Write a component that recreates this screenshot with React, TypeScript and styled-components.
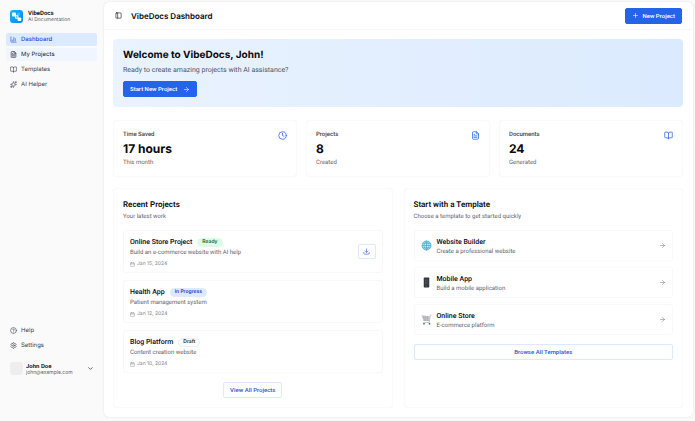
import React from "react";
import styled, { createGlobalStyle, css } from "styled-components";
import {
  ArrowRight,
  BookOpen,
  Calendar,
  ChartColumn,
  ChevronDown,
  CircleHelp,
  Clock,
  Download,
  FileText,
  PanelLeft,
  Plus,
  Settings,
  Sparkles,
} from "lucide-react";

const GlobalStyle = createGlobalStyle`
  *, *::before, *::after { box-sizing: border-box; }
  body {
    margin: 0;
    background: #fafafa;
    color: #09090f;
    font-family: Roboto, "Liberation Sans", sans-serif;
    font-size: 6px;
    line-height: 8px;
    text-rendering: geometricPrecision;
  }
  h1, h2, h3, p { margin: 0; }
  button { font: inherit; color: inherit; cursor: pointer; }
  a { color: inherit; text-decoration: none; }
  ul { list-style: none; margin: 0; padding: 0; }
  svg { flex: none; display: block; }
`;

const displayFont = `Inter, "Liberation Sans", sans-serif`;

const Shell = styled.div`
  display: flex;
  min-height: 100vh;
`;

const Sidebar = styled.aside`
  flex: none;
  width: 104px;
  display: flex;
  flex-direction: column;
  padding: 10px 6px 46px;
`;

const Brand = styled.a`
  display: flex;
  align-items: center;
  gap: 5px;
  padding-left: 4px;
`;

const BrandName = styled.span`
  display: block;
  font-weight: 600;
  line-height: 7px;
`;

const SmallText = styled.span`
  display: block;
  font-family: ${displayFont};
  font-size: 5px;
  line-height: 6px;
  color: #62626b;
`;

const NavList = styled.ul`
  display: flex;
  flex-direction: column;
  gap: 2px;
`;

const MainNav = styled.nav`
  margin-top: 10px;
`;

const FooterNav = styled.nav`
  margin-top: auto;
`;

const NavLink = styled.a<{ $state?: "active" | "hover" }>`
  display: flex;
  align-items: center;
  gap: 4px;
  height: 13px;
  padding: 0 4px;
  margin-right: 1px;
  border-radius: 2px;
  color: #3f3f46;
  font-family: ${displayFont};
  ${(p) =>
    p.$state === "active" &&
    css`
      background: #dbeafe;
      color: #1d4ed8;
      font-weight: 500;
    `}
  ${(p) =>
    p.$state === "hover" &&
    css`
      background: #eff6ff;
      color: #18181b;
    `}
`;

const UserButton = styled.button`
  display: flex;
  align-items: center;
  gap: 3px;
  margin-top: 10px;
  padding: 0 4px;
  border: 0;
  background: none;
  text-align: left;

  > svg { margin-left: auto; }
`;

const Avatar = styled.span`
  width: 13px;
  height: 13px;
  border-radius: 3px;
  background: #eeeeef;
`;

const Panel = styled.main`
  flex: 1;
  min-width: 0;
  margin: 2px 2px 4px 0;
  background: #fff;
  border-radius: 5px;
  box-shadow: 0 0 2px rgba(0, 0, 0, 0.13);
`;

const TopBar = styled.header`
  display: flex;
  align-items: center;
  height: 28px;
  padding: 0 11px 0 10px;
  border-bottom: 1px solid #f6f6f8;
`;

const IconButton = styled.button`
  display: grid;
  place-items: center;
  width: 8px;
  height: 8px;
  padding: 0;
  border: 0;
  background: none;
`;

const PageTitle = styled.h1`
  margin-left: 9px;
  font-family: ${displayFont};
  font-size: 8px;
  line-height: 12px;
  font-weight: 600;
`;

const Button = styled.button<{ $outline?: boolean; $wide?: boolean; $tight?: boolean }>`
  display: inline-flex;
  align-items: center;
  justify-content: center;
  gap: ${(p) => (p.$tight ? 3 : 6)}px;
  height: 16px;
  padding: 0 6px;
  width: ${(p) => (p.$wide ? "100%" : "auto")};
  border: 1px solid ${(p) => (p.$outline ? "#dbeafe" : "#2563eb")};
  border-radius: 2px;
  background: ${(p) => (p.$outline ? "#fff" : "#2563eb")};
  color: ${(p) => (p.$outline ? "#2458d6" : "#fff")};
  font-weight: 500;
  white-space: nowrap;
`;

const TopAction = styled.div`
  margin-left: auto;
`;

const Content = styled.div`
  padding: 9px 10px 9px 9px;
`;

const Hero = styled.section`
  padding: 10px;
  border-radius: 4px;
  background: linear-gradient(90deg, #eaf3ff, #dbeafe);
`;

const HeroTitle = styled.h2`
  font-family: ${displayFont};
  font-size: 10px;
  line-height: 13px;
  font-weight: 700;
`;

const HeroText = styled.p`
  margin: 3px 0 6px;
  font-size: 7px;
  line-height: 10px;
  color: #4b5563;
`;

const Card = styled.section`
  padding: 10px 9px 9px;
  border: 1px solid #fafafc;
  border-radius: 4px;
  background: #fff;
  box-shadow: 0 0 1px rgba(20, 30, 60, 0.05);
`;

const Stats = styled.div`
  display: grid;
  grid-template-columns: repeat(3, 1fr);
  gap: 9px;
  margin: 13px 0 11px;
`;

const StatHead = styled.div`
  display: flex;
  justify-content: space-between;
  align-items: center;
  height: 8px;
  color: #3f3f46;
  font-weight: 500;

  svg { color: #2563eb; }
`;

const StatValue = styled.p`
  margin: 3px 0;
  font-family: ${displayFont};
  font-size: 12px;
  line-height: 14px;
  font-weight: 700;
`;

const Muted = styled.p`
  color: #62626b;
`;

const Columns = styled.div`
  display: grid;
  grid-template-columns: repeat(2, 1fr);
  gap: 11px;
`;

const CardTitle = styled.h2`
  font-size: 8px;
  line-height: 12px;
  font-weight: 600;
`;

const CardHead = styled.header`
  display: flex;
  flex-direction: column;
  gap: 2px;
  margin-bottom: 9px;
`;

const Stack = styled.div<{ $gap: number }>`
  display: flex;
  flex-direction: column;
  gap: ${(p) => p.$gap}px;
`;

const tile = css`
  border: 1px solid #f8f8fa;
  border-radius: 3px;
  background: #fff;
`;

const Project = styled.article`
  ${tile}
  display: flex;
  align-items: center;
  justify-content: space-between;
  height: 43px;
  padding: 0 6px;
`;

const ProjectInfo = styled.div`
  padding-top: 2px;
`;

const ProjectHead = styled.div`
  display: flex;
  align-items: center;
  gap: 5px;
  margin-bottom: 2px;
`;

const ItemTitle = styled.h3`
  font-size: 7px;
  line-height: 9px;
  font-weight: 500;
`;

type Tone = "ready" | "progress" | "draft";
const tones: Record<Tone, [string, string, string]> = {
  ready: ["#dcfce7", "#166534", "#dcfce7"],
  progress: ["#dbeafe", "#1e40af", "#dbeafe"],
  draft: ["#fbfcfd", "#27272a", "#eceff3"],
};

const Badge = styled.span<{ $tone: Tone }>`
  height: 9px;
  padding: 0 4px;
  border: 1px solid ${(p) => tones[p.$tone][2]};
  border-radius: 5px;
  background: ${(p) => tones[p.$tone][0]};
  color: ${(p) => tones[p.$tone][1]};
  font-family: ${displayFont};
  font-size: 5px;
  line-height: 7px;
  font-weight: 600;
`;

const DateLine = styled.p`
  display: flex;
  align-items: center;
  gap: 2px;
  margin-top: 4px;
  font-family: ${displayFont};
  font-size: 5px;
  line-height: 6px;
  color: #85858f;
`;

const DownloadButton = styled(Button)`
  width: 18px;
  height: 15px;
  padding: 0;
`;

const Centered = styled.div`
  display: flex;
  justify-content: center;
  margin-top: 9px;
`;

const Template = styled.a`
  ${tile}
  display: flex;
  align-items: center;
  gap: 5px;
  height: 31px;
  padding: 0 6px;

  > svg:last-child { margin-left: auto; color: #85858f; }
`;

const TemplateInfo = styled.div`
  display: grid;
  gap: 1px;
  padding-top: 2px;
`;

const Logo = () => (
  <svg width="13" height="13" viewBox="0 0 26 26" aria-hidden="true">
    <defs>
      <linearGradient id="brand" x1="0" y1="0" x2="1" y2="1">
        <stop offset="0" stopColor="#18b5f8" />
        <stop offset="1" stopColor="#0788f2" />
      </linearGradient>
    </defs>
    <rect width="26" height="26" rx="6" fill="url(#brand)" />
    <rect x="4" y="5" width="8" height="8" rx="2" fill="#fff" />
    <rect x="10" y="10.500" width="7" height="7" rx="1.500" fill="#fff" />
    <rect x="15" y="15" width="7.500" height="7" rx="2" fill="#fff" />
    <rect x="14" y="5.500" width="6" height="6" rx="1.500" fill="#fff" opacity="0.25" />
    <rect x="11.800" y="12.300" width="3.400" height="3.400" rx="0.800" fill="#4fbcf8" />
  </svg>
);

const Globe = () => (
  <svg width="11" height="11" viewBox="0 0 22 22" fill="none" aria-hidden="true">
    <circle cx="11" cy="11" r="9" fill="#c9edf7" stroke="#3a9fc0" strokeWidth="1.500" />
    <path
      d="M11 2v18M2 11h18M3.500 6.500h15M3.500 15.500h15M11 2C4.500 7 4.500 15 11 20M11 2c6.500 5 6.500 13 0 18"
      stroke="#3a9fc0"
      strokeWidth="1.300"
    />
  </svg>
);

const Phone = () => (
  <svg width="11" height="11" viewBox="0 0 22 22" aria-hidden="true">
    <rect x="5.500" y="1" width="11" height="20" rx="1.500" fill="#30343a" />
    <rect x="7" y="3" width="8" height="15" fill="#3a4047" />
    <path d="M9 5v3M12 5v3M9 10v3M12 10v3" stroke="#535c66" strokeWidth="1.500" />
    <path d="M9.500 19.500h3" stroke="#70777f" />
  </svg>
);

const Cart = () => (
  <svg width="11" height="11" viewBox="0 0 22 22" fill="none" aria-hidden="true">
    <path d="M1 3l15 2.500h2L17 14H5Z" fill="#dedfe1" />
    <path
      d="M1 3.500l16 2M3 7l13 1M4 10h12M5 13h12M5 4l2 9M9 4l1 9M13 5v8M21 2h-2.500L16.500 17H5"
      stroke="#9a9da2"
      strokeWidth="1.100"
    />
    <circle cx="6" cy="19.500" r="1.700" fill="#44474b" />
    <circle cx="17" cy="19.500" r="1.700" fill="#44474b" />
  </svg>
);

const navItems = [
  { label: "Dashboard", Icon: ChartColumn, state: "active" as const },
  { label: "My Projects", Icon: FileText, state: "hover" as const },
  { label: "Templates", Icon: BookOpen },
  { label: "AI Helper", Icon: Sparkles },
];

const footerItems = [
  { label: "Help", Icon: CircleHelp },
  { label: "Settings", Icon: Settings },
];

const stats = [
  { label: "Time Saved", value: "17 hours", note: "This month", Icon: Clock },
  { label: "Projects", value: "8", note: "Created", Icon: FileText },
  { label: "Documents", value: "24", note: "Generated", Icon: BookOpen },
];

const projects: {
  title: string;
  text: string;
  date: string;
  status: string;
  tone: Tone;
  download?: boolean;
}[] = [
  {
    title: "Online Store Project",
    text: "Build an e-commerce website with AI help",
    date: "Jan 15, 2024",
    status: "Ready",
    tone: "ready",
    download: true,
  },
  {
    title: "Health App",
    text: "Patient management system",
    date: "Jan 12, 2024",
    status: "In Progress",
    tone: "progress",
  },
  {
    title: "Blog Platform",
    text: "Content creation website",
    date: "Jan 10, 2024",
    status: "Draft",
    tone: "draft",
  },
];

const templates = [
  { title: "Website Builder", text: "Create a professional website", Art: Globe },
  { title: "Mobile App", text: "Build a mobile application", Art: Phone },
  { title: "Online Store", text: "E-commerce platform", Art: Cart },
];

export default function App() {
  return (
    <>
      <GlobalStyle />
      <Shell>
        <Sidebar>
          <Brand href="#">
            <Logo />
            <span>
              <BrandName>VibeDocs</BrandName>
              <SmallText>AI Documentation</SmallText>
            </span>
          </Brand>
          <MainNav aria-label="Main">
            <NavList>
              {navItems.map(({ label, Icon, state }) => (
                <li key={label}>
                  <NavLink href="#" $state={state}>
                    <Icon size={7} />
                    {label}
                  </NavLink>
                </li>
              ))}
            </NavList>
          </MainNav>
          <FooterNav aria-label="Support">
            <NavList>
              {footerItems.map(({ label, Icon }) => (
                <li key={label}>
                  <NavLink href="#">
                    <Icon size={7} />
                    {label}
                  </NavLink>
                </li>
              ))}
            </NavList>
          </FooterNav>
          <UserButton>
            <Avatar />
            <span>
              <BrandName>John Doe</BrandName>
              <SmallText>john@example.com</SmallText>
            </span>
            <ChevronDown size={7} />
          </UserButton>
        </Sidebar>

        <Panel>
          <TopBar>
            <IconButton aria-label="Toggle sidebar">
              <PanelLeft size={7} />
            </IconButton>
            <PageTitle>VibeDocs Dashboard</PageTitle>
            <TopAction>
              <Button $tight>
                <Plus size={7} />
                New Project
              </Button>
            </TopAction>
          </TopBar>

          <Content>
            <Hero>
              <HeroTitle>Welcome to VibeDocs, John!</HeroTitle>
              <HeroText>Ready to create amazing projects with AI assistance?</HeroText>
              <Button>
                Start New Project
                <ArrowRight size={7} />
              </Button>
            </Hero>

            <Stats>
              {stats.map(({ label, value, note, Icon }) => (
                <Card key={label}>
                  <StatHead>
                    {label}
                    <Icon size={9} />
                  </StatHead>
                  <StatValue>{value}</StatValue>
                  <Muted>{note}</Muted>
                </Card>
              ))}
            </Stats>

            <Columns>
              <Card>
                <CardHead>
                  <CardTitle>Recent Projects</CardTitle>
                  <Muted>Your latest work</Muted>
                </CardHead>
                <Stack $gap={7}>
                  {projects.map((p) => (
                    <Project key={p.title}>
                      <ProjectInfo>
                        <ProjectHead>
                          <ItemTitle>{p.title}</ItemTitle>
                          <Badge $tone={p.tone}>{p.status}</Badge>
                        </ProjectHead>
                        <Muted>{p.text}</Muted>
                        <DateLine>
                          <Calendar size={5} />
                          {p.date}
                        </DateLine>
                      </ProjectInfo>
                      {p.download && (
                        <DownloadButton $outline aria-label="Download project">
                          <Download size={7} />
                        </DownloadButton>
                      )}
                    </Project>
                  ))}
                </Stack>
                <Centered>
                  <Button $outline>View All Projects</Button>
                </Centered>
              </Card>

              <Card>
                <CardHead>
                  <CardTitle>Start with a Template</CardTitle>
                  <Muted>Choose a template to get started quickly</Muted>
                </CardHead>
                <Stack $gap={6}>
                  {templates.map(({ title, text, Art }) => (
                    <Template href="#" key={title}>
                      <Art />
                      <TemplateInfo>
                        <ItemTitle>{title}</ItemTitle>
                        <Muted>{text}</Muted>
                      </TemplateInfo>
                      <ArrowRight size={7} />
                    </Template>
                  ))}
                </Stack>
                <Centered>
                  <Button $outline $wide>
                    Browse All Templates
                  </Button>
                </Centered>
              </Card>
            </Columns>
          </Content>
        </Panel>
      </Shell>
    </>
  );
}
